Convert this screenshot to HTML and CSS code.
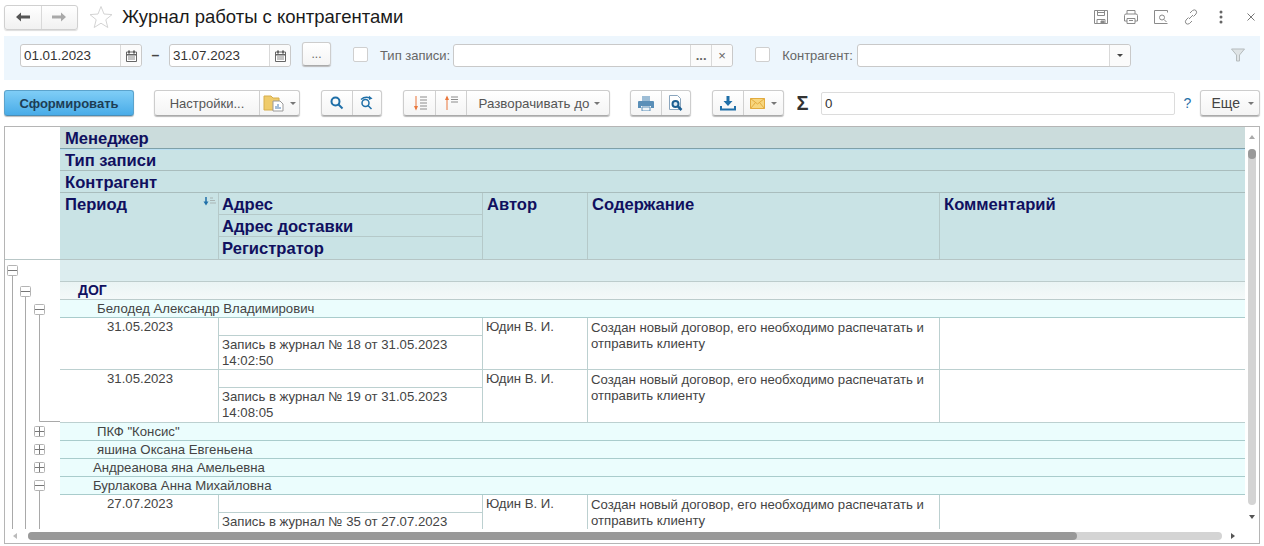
FILE: index.html
```html
<!DOCTYPE html>
<html lang="ru">
<head>
    <meta charset="UTF-8">
    <title>Журнал работы с контрагентами</title>
    <link rel="stylesheet" href="styles.css">
</head>
<body>
    <!-- Шапка формы -->
    <div class="topbar">
        <div class="navbtns">
            <div class="navbtn"><svg width="16" height="12" viewBox="0 0 16 12"><path d="M1 6l5-4.500v3h9v3H6v3z" fill="#555"/></svg></div>
            <div class="navbtn"><svg width="16" height="12" viewBox="0 0 16 12"><path d="M15 6l-5-4.500v3H1v3h9v3z" fill="#a9a9a9"/></svg></div>
        </div>
        <svg class="star" width="24" height="24" viewBox="0 0 24 24"><path d="M12 1.500l3 7.500 8 .6-6.200 5.100 2 7.800L12 18.200l-6.800 4.300 2-7.800L1 9.600l8-.6z" fill="#fff" stroke="#d4d4d4"/></svg>
        <h1 class="title">Журнал работы с контрагентами</h1>
        <div class="topicons">
            <svg width="16" height="16" viewBox="0 0 16 16" fill="none" stroke="#8a8a8a"><path d="M1.500 1.500h13v13h-13z"/><path d="M4.500 1.500v5h7v-5M5 3.500h6M4 14.500v-4h8v4"/><path d="M8 12h3v2.500H8z" fill="#8a8a8a"/></svg>
            <svg width="16" height="16" viewBox="0 0 16 16" fill="none" stroke="#8a8a8a"><path d="M4 5V1.500h8V5M4 12H1.500V6.500q0-1.500 1.500-1.500h10q1.500 0 1.500 1.500V12H12"/><path d="M4 9.500h8v5H4zM6 11.500h4"/></svg>
            <svg width="16" height="16" viewBox="0 0 16 16" fill="none" stroke="#8a8a8a"><path d="M14.500 3.500v-2h-13v13h13"/><circle cx="9" cy="8.500" r="2.500"/><path d="M11 10.500l2.500 2.500"/></svg>
            <svg width="16" height="16" viewBox="0 0 16 16" fill="none" stroke="#8a8a8a"><path d="M6 10l4-4M7 4l2.500-2.500q1.800-1.300 3.500 0 1.300 1.700 0 3.500L10.500 7.500M9 12l-2.500 2.500q-1.800 1.300-3.500 0-1.300-1.700 0-3.500L5.500 8.500"/></svg>
            <svg width="16" height="16" viewBox="0 0 16 16" fill="#666"><circle cx="8" cy="3" r="1.500"/><circle cx="8" cy="8" r="1.500"/><circle cx="8" cy="13" r="1.500"/></svg>
            <svg width="16" height="16" viewBox="0 0 16 16" fill="none" stroke="#777"><path d="M4.500 4.500l7 7M11.500 4.500l-7 7"/></svg>
        </div>
    </div>

    <!-- Отборы -->
    <div class="filters">
        <div class="field date-field">
            <span class="field-value">01.01.2023</span>
            <span class="field-btn"><svg width="11" height="12" viewBox="0 0 11 12"><path d="M.5 2h10v9.500H.5z" fill="#fff" stroke="#666"/><path d="M2 .5h2v3H2zM7 .5h2v3H7zM1 4h9v1.500H1z" fill="#666"/><path d="M2 7h7M2 9h7" stroke="#888"/></svg></span>
        </div>
        <span class="dash">–</span>
        <div class="field date-field">
            <span class="field-value">31.07.2023</span>
            <span class="field-btn"><svg width="11" height="12" viewBox="0 0 11 12"><path d="M.5 2h10v9.500H.5z" fill="#fff" stroke="#666"/><path d="M2 .5h2v3H2zM7 .5h2v3H7zM1 4h9v1.500H1z" fill="#666"/><path d="M2 7h7M2 9h7" stroke="#888"/></svg></span>
        </div>
        <div class="btn dots-btn">...</div>
        <span class="check"></span>
        <span class="flabel">Тип записи:</span>
        <div class="field type-field">
            <span class="field-value"></span>
            <span class="field-btn dots">...</span>
            <span class="field-btn">×</span>
        </div>
        <span class="check"></span>
        <span class="flabel">Контрагент:</span>
        <div class="field agent-field">
            <span class="field-value"></span>
            <span class="field-btn"><i class="caret dark"></i></span>
        </div>
        <svg class="funnel" width="14" height="14" viewBox="0 0 14 14"><path d="M.5 1h13L8.500 7v6h-3V7z" fill="#dfe4e6" stroke="#b5bbbd"/></svg>
    </div>

    <!-- Командная панель -->
    <div class="toolbar">
        <div class="btn primary">Сформировать</div>
        <div class="btngroup settings">
            <div class="btn grow">Настройки...</div>
            <div class="btn grow">
                <svg width="22" height="18" viewBox="0 0 22 18"><path d="M1 2h7l2 2h6v12H1z" fill="#efcb6b" stroke="#d6ae4c"/><path d="M10 7h7l3 3v7H10z" fill="#fff" stroke="#999"/><path d="M13 15v-3M15 15v-5M17 15v-2" stroke="#4a7fb5"/></svg>
                <i class="caret"></i>
            </div>
        </div>
        <div class="btngroup search">
            <div class="btn grow"><svg width="14" height="14" viewBox="0 0 14 14" fill="none" stroke="#1f6fa8" stroke-width="2"><circle cx="5.500" cy="5.500" r="4"/><path d="M8.500 8.500l4 4"/></svg></div>
            <div class="btn grow"><svg width="16" height="16" viewBox="0 0 16 16" fill="none" stroke="#1f6fa8" stroke-width="1.500"><circle cx="6.500" cy="8" r="3.500"/><path d="M9 10.500l3.500 3.500M2 4.500q4-3.500 9-1.500"/><path d="M10 .8l3.500 2.700-3.500 1.500z" fill="#1f6fa8" stroke="none"/></svg></div>
        </div>
        <div class="btngroup expand">
            <div class="btn sortbtn"><svg width="18" height="18" viewBox="0 0 18 18"><path d="M5 2v13" stroke="#e9773c"/><path d="M3 12l2 4.500L7 12z" fill="#e9773c"/><path d="M9 3h7M9 6h7M9 9h7M9 12h7M9 15h7" stroke="#8c8c8c"/></svg></div>
            <div class="btn sortbtn"><svg width="18" height="18" viewBox="0 0 18 18"><path d="M5 3v13" stroke="#e9773c"/><path d="M3 6l2-4.500L7 6z" fill="#e9773c"/><path d="M9 3h7M9 5.500h7M9 8h7" stroke="#8c8c8c"/></svg></div>
            <div class="btn grow">Разворачивать до <i class="caret"></i></div>
        </div>
        <div class="btngroup print">
            <div class="btn grow"><svg width="16" height="15" viewBox="0 0 16 15"><path d="M4 0h8v5H4z" fill="#9dbdd6"/><path d="M1 5h14q1 0 1 1v6h-3v-2H3v2H0V6q0-1 1-1z" fill="#5a8fb8"/><path d="M4 11h8v4H4z" fill="#eef4f8" stroke="#5a8fb8"/></svg></div>
            <div class="btn grow"><svg width="14" height="16" viewBox="0 0 14 16"><path d="M.5.5h8l3 3v11H.5z" fill="#fff" stroke="#8aa5bd"/><circle cx="6.500" cy="9" r="3" fill="#dfeaf2" stroke="#1d5f92" stroke-width="2"/><path d="M9 11.500l3.500 3.500" stroke="#1d5f92" stroke-width="2.500"/></svg></div>
        </div>
        <div class="btngroup send">
            <div class="btn grow"><svg width="16" height="15" viewBox="0 0 16 15"><path d="M6.500 0h3v5h3L8 10 3.500 5h3z" fill="#1f6fa8"/><path d="M1 10v3.500h14V10" fill="none" stroke="#1f6fa8" stroke-width="2"/></svg></div>
            <div class="btn grow"><svg width="15" height="11" viewBox="0 0 15 11"><path d="M.5.5h14v10H.5z" fill="#f7d67e" stroke="#e2ab3e"/><path d="M.5.5l7 5.500 7-5.500M.5 10.500l5-6M14.500 10.500l-5-6" fill="none" stroke="#e2ab3e"/></svg><i class="caret"></i></div>
        </div>
        <span class="sigma">Σ</span>
        <div class="sum-input">0</div>
        <span class="help">?</span>
        <div class="btn more">Еще <i class="caret"></i></div>
    </div>

    <!-- Табличный документ -->
    <div class="report">
        <div class="viewport">
            <div class="gutter">
                <svg class="tree" width="56" height="403" viewBox="0 0 56 403" fill="none" stroke="#a9a9a9">
                    <path d="M7.500 146v257M20.500 169v234M34.500 188v106.500h21"/>
                    <path d="M34.500 364v39"/>
                    <g fill="#fff" stroke="#b4b4b4">
                        <rect x="2.500" y="138.500" width="10" height="10" rx="1"/>
                        <rect x="15.500" y="159.500" width="10" height="10" rx="1"/>
                        <rect x="29.500" y="177.500" width="10" height="10" rx="1"/>
                        <rect x="29.500" y="299.500" width="10" height="10" rx="1"/>
                        <rect x="29.500" y="317.500" width="10" height="10" rx="1"/>
                        <rect x="29.500" y="335.500" width="10" height="10" rx="1"/>
                        <rect x="29.500" y="353.500" width="10" height="10" rx="1"/>
                    </g>
                    <g stroke="#777">
                        <path d="M3 143.500h9M16 164.500h9M30 182.500h9M30 304.500h9M30 322.500h9M30 340.500h9M30 358.500h9"/>
                        <path d="M34.500 300v9M34.500 318v9M34.500 336v9"/>
                    </g>
                    <path d="M0 132.500h56" stroke="#b9c7c7"/>
                </svg>
            </div>
            <div class="sheet">
                <div class="head-row head-first">Менеджер</div>
                <div class="head-row head-blue">Тип записи</div>
                <div class="head-row">Контрагент</div>
                <div class="head-cols">
                    <div class="hcol">
                        <span>Период</span>
                        <svg class="sort-mark" width="14" height="9" viewBox="0 0 14 9"><path d="M3 0v5" stroke="#1f6fa8" stroke-width="1.500"/><path d="M.5 4.500h5L3 8.500z" fill="#1f6fa8"/><path d="M7 1h3M7 3.500h5M7 6h6" stroke="#a9b5b5"/></svg>
                    </div>
                    <div class="hcol hstack">
                        <div>Адрес</div>
                        <div>Адрес доставки</div>
                        <div>Регистратор</div>
                    </div>
                    <div class="hcol">Автор</div>
                    <div class="hcol">Содержание</div>
                    <div class="hcol">Комментарий</div>
                </div>

                <div class="total-row"></div>
                <div class="type-row">ДОГ</div>
                <div class="agent-row indent">Белодед Александр Владимирович</div>

                <div class="rec">
                    <div class="rec-date">31.05.2023</div>
                    <div class="rec-addr"><div class="rec-empty"></div><div class="rec-reg">Запись в журнал № 18 от 31.05.2023 14:02:50</div></div>
                    <div class="rec-cell">Юдин В. И.</div>
                    <div class="rec-cell rec-text">Создан новый договор, его необходимо распечатать и отправить клиенту</div>
                    <div class="rec-cell"></div>
                </div>
                <div class="rec rec-tall">
                    <div class="rec-date">31.05.2023</div>
                    <div class="rec-addr"><div class="rec-empty"></div><div class="rec-reg">Запись в журнал № 19 от 31.05.2023 14:08:05</div></div>
                    <div class="rec-cell">Юдин В. И.</div>
                    <div class="rec-cell rec-text">Создан новый договор, его необходимо распечатать и отправить клиенту</div>
                    <div class="rec-cell"></div>
                </div>

                <div class="agent-row indent">ПКФ "Консис"</div>
                <div class="agent-row indent">яшина Оксана Евгеньена</div>
                <div class="agent-row">Андреанова яна Амельевна</div>
                <div class="agent-row">Бурлакова Анна Михайловна</div>

                <div class="rec rec-cut">
                    <div class="rec-date">27.07.2023</div>
                    <div class="rec-addr"><div class="rec-empty"></div><div class="rec-reg">Запись в журнал № 35 от 27.07.2023</div></div>
                    <div class="rec-cell">Юдин В. И.</div>
                    <div class="rec-cell rec-text">Создан новый договор, его необходимо распечатать и отправить клиенту</div>
                    <div class="rec-cell"></div>
                </div>
            </div>
        </div>
        <div class="vscroll">
            <i class="arrow-up"></i>
            <div class="vtrack"><div class="vthumb"></div></div>
            <i class="arrow-down"></i>
        </div>
        <div class="hscroll">
            <i class="arrow-left"></i>
            <div class="htrack"><div class="hthumb"></div></div>
            <i class="arrow-right"></i>
        </div>
    </div>
</body>
</html>
```

FILE: styles.css
```css
* {
    box-sizing: border-box;
}

body {
    margin: 0;
    width: 1264px;
    height: 546px;
    overflow: hidden;
    background: #fff;
    color: #4a4a4a;
    font: 12px "Liberation Sans", Arial, sans-serif;
}

/* Шапка */
.topbar {
    display: flex;
    align-items: center;
    height: 36px;
    padding: 3px 0 5px 4px;
}
.navbtns {
    display: flex;
    width: 74px;
    height: 25px;
    border: 1px solid #d0d0d0;
    border-radius: 3px;
    background: linear-gradient(#fff, #f1f1f1);
    box-shadow: 0 1px 1px #ddd;
}
.navbtn {
    flex: 1;
    display: flex;
    align-items: center;
    justify-content: center;
}
.navbtn:first-child {
    border-right: 1px solid #d9d9d9;
}
.star {
    margin-left: 11px;
}
.title {
    margin: 0 0 0 9px;
    color: #1a1a1a;
    font-size: 18.500px;
    font-weight: normal;
    white-space: nowrap;
}
.topicons {
    display: flex;
    gap: 14px;
    margin-left: auto;
    padding-right: 5px;
}

/* Отборы */
.filters {
    display: flex;
    align-items: flex-start;
    height: 44px;
    margin: 0 4px;
    padding: 8px 0 0 16px;
    background: #edf6fd;
}
.field {
    display: flex;
    height: 23px;
    border: 1px solid #c9c9c9;
    border-radius: 3px;
    background: #fff;
    color: #333;
    font-size: 13.400px;
    line-height: 21px;
}
.field-value {
    flex: 1;
    padding-left: 3px;
}
.field-btn {
    display: flex;
    align-items: center;
    justify-content: center;
    width: 21px;
    border-left: 1px solid #d9d9d9;
    border-radius: 0 3px 3px 0;
    background: #fbfbfb;
    color: #666;
    font-size: 13px;
}
.field-btn.dots {
    border-radius: 0;
    font-weight: bold;
    line-height: 14px;
}
.date-field {
    width: 122px;
}
.dash {
    width: 27px;
    color: #444;
    font-size: 14px;
    font-weight: bold;
    line-height: 23px;
    text-align: center;
}
.type-field {
    width: 280px;
    margin-left: 3px;
}
.agent-field {
    width: 274px;
    margin-left: 4px;
}
.flabel {
    color: #666;
    font-size: 13px;
    line-height: 23px;
    white-space: nowrap;
}
.check {
    width: 15px;
    height: 15px;
    margin: 3px 12px 0 22px;
    border: 1px solid #cfcfcf;
    border-radius: 2px;
    background: #fff;
}
.funnel {
    margin: 4px 0 0 100px;
}

/* Кнопки */
.btn {
    display: flex;
    align-items: center;
    justify-content: center;
    height: 26px;
    border: 1px solid #cdcdcd;
    border-bottom-color: #aaa;
    border-radius: 3px;
    background: linear-gradient(#fff, #f4f4f4);
    box-shadow: 0 1px 1px #bbb;
    color: #555;
    font-size: 13px;
    white-space: nowrap;
}
.dots-btn {
    width: 29px;
    height: 24px;
    margin: -2px 0 0 11px;
    color: #666;
    font-size: 12px;
}
.btngroup {
    display: flex;
    height: 26px;
    border: 1px solid #cdcdcd;
    border-bottom-color: #aaa;
    border-radius: 3px;
    box-shadow: 0 1px 1px #bbb;
    background: linear-gradient(#fff, #f4f4f4);
}
.btngroup .btn {
    height: 24px;
    border: 0;
    border-radius: 0;
    background: none;
    box-shadow: none;
}
.btngroup .btn + .btn {
    border-left: 1px solid #d0d0d0;
}
.grow {
    flex: 1 1 auto;
}
.caret {
    display: inline-block;
    width: 0;
    height: 0;
    margin-left: 5px;
    border-top: 3px solid #777;
    border-left: 3px solid transparent;
    border-right: 3px solid transparent;
}
.caret.dark {
    margin: 0;
    border-top-color: #444;
}

/* Командная панель */
.toolbar {
    display: flex;
    align-items: center;
    height: 26px;
    margin: 10px 4px 0;
}
.primary {
    width: 130px;
    border-color: #5ba3cc;
    border-bottom-color: #4a8db5;
    background: linear-gradient(#7fcdf6, #49ace8);
    color: #1d3d55;
    font-weight: bold;
}
.settings {
    width: 146px;
    margin-left: 20px;
}
.settings .btn:first-child {
    flex: 0 0 104px;
}
.search {
    width: 61px;
    margin-left: 21px;
}
.search .btn {
    flex: 1 1 50%;
}
.expand {
    width: 207px;
    margin-left: 21px;
}
.expand .grow {
    padding-left: 3px;
    font-size: 13.300px;
}
.sortbtn {
    flex: 0 0 31px;
}
.print {
    width: 61px;
    margin-left: 20px;
}
.print .btn {
    flex: 1 1 50%;
}
.send {
    width: 72px;
    margin-left: 21px;
}
.send .btn:first-child {
    flex: 0 0 30px;
}
.send .btn:last-child {
    gap: 1px;
}
.sigma {
    width: 37px;
    color: #333;
    font-size: 20px;
    font-weight: bold;
    text-align: center;
}
.sum-input {
    width: 354px;
    height: 23px;
    padding-left: 3px;
    border: 1px solid #dcdcdc;
    border-radius: 2px;
    color: #333;
    font-size: 13.300px;
    line-height: 21px;
}
.help {
    width: 25px;
    color: #1f6fa8;
    font-size: 14px;
    text-align: center;
}
.more {
    justify-content: flex-end;
    width: 60px;
    padding-right: 5px;
    color: #444;
    font-size: 14px;
}
.more .caret {
    margin-left: 8px;
}

/* Табличный документ */
.report {
    display: grid;
    grid-template-columns: 1fr 14px;
    grid-template-rows: 402px 1fr;
    height: 418px;
    margin: 10px 4px 0;
    border: 1px solid #b5b5b5;
}
.viewport {
    display: flex;
    overflow: hidden;
}
.gutter {
    flex: 0 0 55px;
    overflow: hidden;
}
.tree {
    display: block;
    overflow: visible;
}
.sheet {
    flex: 1;
    min-width: 0;
    color: #444;
    font-size: 13.200px;
}
.head-row {
    height: 22px;
    padding: 3px 0 0 5px;
    border-bottom: 1px solid #a9bdbd;
    background: #c9e3e5;
    color: #10105f;
    font-size: 16.600px;
    font-weight: bold;
    line-height: 18px;
}
.head-first {
    background: #cbdcdc;
    border-bottom: 1px solid #7fa0a8;
}
.head-blue {
    box-shadow: inset 0 1px 0 #b9dff2;
}
.head-cols {
    display: grid;
    grid-template-columns: 159px 264px 105px 352px 1fr;
    height: 67px;
    border-bottom: 1px solid #b5c5c5;
    background: #c9e3e5;
    color: #10105f;
    font-size: 16.600px;
    font-weight: bold;
    line-height: 18px;
}
.hcol {
    display: flex;
    justify-content: space-between;
    padding: 3px 1px 3px 4px;
    border-right: 1px solid #b5c9c9;
}
.hcol:first-child {
    padding-left: 5px;
}
.hcol:last-child {
    border-right: 0;
}
.hstack {
    display: block;
    padding: 0;
}
.hstack div {
    height: 22px;
    padding: 3px 0 0 3px;
    border-bottom: 1px solid #b5c9c9;
}
.hstack div:last-child {
    border-bottom: 0;
}
.sort-mark {
    margin-top: 1px;
}
.total-row {
    height: 22px;
    border-bottom: 1px solid #bccccc;
    background: #dcedef;
}
.type-row {
    height: 18px;
    padding-left: 18px;
    border-bottom: 1px solid #bccccc;
    background: linear-gradient(#eaf4f4, #f4f9f9);
    color: #10105f;
    font-size: 14px;
    font-weight: bold;
    line-height: 17px;
}
.agent-row {
    height: 18px;
    padding-left: 33px;
    border-bottom: 1px solid #a9cccc;
    background: #ebfdfd;
    line-height: 18px;
}
.agent-row.indent {
    padding-left: 37px;
}
.rec {
    display: grid;
    grid-template-columns: 159px 264px 105px 352px 1fr;
    height: 52px;
    border-bottom: 1px solid #bcd0d0;
    line-height: 16px;
}
.rec-tall {
    height: 53px;
}
.rec-cut {
    height: 35px;
    border-bottom: 0;
}
.rec-date {
    padding-top: 1px;
    padding-left: 47px;
    border-right: 1px solid #bcd0d0;
}
.rec-empty {
    height: 18px;
    border-bottom: 1px solid #bcd0d0;
}
.rec-reg {
    padding: 1px 20px 0 3px;
}
.rec-addr {
    border-right: 1px solid #bcd0d0;
}
.rec-cell {
    padding: 1px 3px 0;
    border-right: 1px solid #bcd0d0;
}
.rec-text {
    padding: 2px 8px 0 3px;
}
.rec-cell:last-child {
    border-right: 0;
}

/* Прокрутка */
.vscroll {
    display: flex;
    flex-direction: column;
    align-items: center;
    padding: 8px 0 10px;
}
.vtrack {
    flex: 1;
    width: 8px;
    margin: 10px 0;
    border-radius: 4px;
    background: #d4d4d4;
}
.vthumb {
    height: 10px;
    border-radius: 4px;
    background: #999;
}
.hscroll {
    display: flex;
    align-items: center;
    grid-column: 1 / 3;
    padding: 0 24px 0 8px;
}
.htrack {
    flex: 1;
    height: 8px;
    margin: 0 9px 0 11px;
    border-radius: 4px;
    background: #d4d4d4;
}
.hthumb {
    width: 1049px;
    height: 8px;
    border-radius: 4px;
    background: #999;
}
.arrow-up,
.arrow-down {
    width: 0;
    height: 0;
    border-left: 3px solid transparent;
    border-right: 3px solid transparent;
}
.arrow-up {
    border-bottom: 4px solid #aaa;
}
.arrow-down {
    border-top: 4px solid #555;
}
.arrow-left,
.arrow-right {
    width: 0;
    height: 0;
    border-top: 3px solid transparent;
    border-bottom: 3px solid transparent;
}
.arrow-left {
    border-right: 4px solid #bbb;
}
.arrow-right {
    border-left: 4px solid #555;
}
```
